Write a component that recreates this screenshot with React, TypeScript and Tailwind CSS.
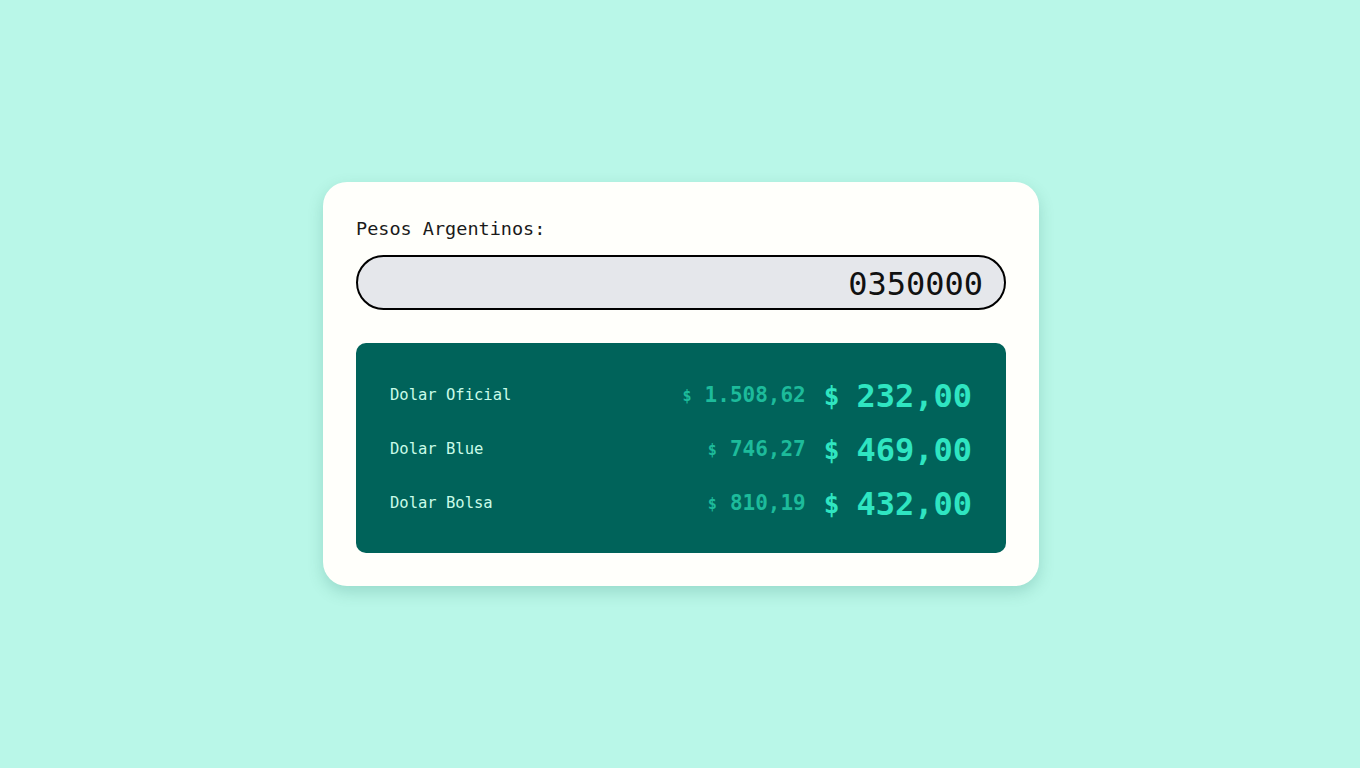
import { useState } from "react";

const rates = [
  { label: "Dolar Oficial", rate: "1.508,62", result: "232,00" },
  { label: "Dolar Blue", rate: "746,27", result: "469,00" },
  { label: "Dolar Bolsa", rate: "810,19", result: "432,00" },
];

const App = () => {
  const [pesos, setPesos] = useState("0350000");

  return (
    <div className="min-h-screen w-full bg-[#b9f7e8] flex items-center justify-center pl-[2px] font-['DejaVu_Sans_Mono',monospace]">
      <div className="w-[716px] bg-[#fffffb] rounded-[24px] p-[33px] shadow-[0_6px_16px_rgba(0,90,70,0.18)]">
        {/* Input */}
        <label className="block text-[18.5px] leading-[28px] text-[#1a1a1a]">
          Pesos Argentinos:
        </label>
        <input
          type="number"
          value={pesos}
          onChange={(e) => setPesos(e.target.value)}
          className="mt-[12px] w-full h-[55px] rounded-full border-2 border-black bg-[#e5e7eb] pl-[8px] pr-[6px] pt-[2px] text-right text-[32px] text-[#111] outline-none"
        />

        {/* Results */}
        <div className="mt-[33px] bg-[#00635a] rounded-[10px] px-[34px] pt-[26px] pb-[22px]">
          {rates.map((item) => (
            <div key={item.label} className="h-[54px] flex items-center justify-between">
              <span className="text-[15.5px] text-[#c9fbe8]">{item.label}</span>
              <div className="flex items-center">
                <span className="flex items-center gap-[13px] font-bold text-[#1dbb9b]">
                  <span className="text-[15px]">$</span>
                  <span className="text-[21px]">{item.rate}</span>
                </span>
                <span className="ml-[18px] flex items-center gap-[17px] font-bold text-[#2fe5c1]">
                  <span className="text-[26px]">$</span>
                  <span className="text-[32px]">{item.result}</span>
                </span>
              </div>
            </div>
          ))}
        </div>
      </div>
    </div>
  );
};

export default App;
